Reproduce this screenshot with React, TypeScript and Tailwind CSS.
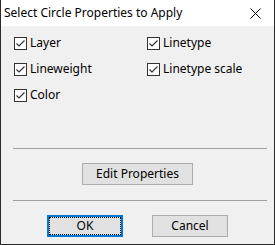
import React from "react";

function Check({ label }: { label: string }) {
  return (
    <div className="flex h-[26px] items-center">
      <div className="flex h-[13px] w-[13px] items-center justify-center border border-[#333333] bg-white">
        <svg width="11" height="11" viewBox="0 0 11 11">
          <path d="M1.5 5.5 L4 8 L9.5 2.5" fill="none" stroke="#333333" strokeWidth="1.2" />
        </svg>
      </div>
      <span className="ml-[3px] text-[12px] leading-none text-black">{label}</span>
    </div>
  );
}

export default function App() {
  return (
    <div
      className="flex h-[245px] w-[275px] flex-col border-x border-b border-[#2a2a2a] bg-[#f0f0f0]"
      style={{ fontFamily: '"Noto Sans", "Open Sans", sans-serif' }}
    >
      <div className="flex h-[26px] items-center justify-between bg-white pl-[3px] pr-[13px]">
        <span className="text-[12px] text-black">Select Circle Properties to Apply</span>
        <svg width="11" height="11" viewBox="0 0 11 11">
          <path d="M0.5 0.5 L10.5 10.5 M10.5 0.5 L0.5 10.5" stroke="#000" strokeWidth="1" />
        </svg>
      </div>
      <div className="flex flex-col pt-[4px]">
        <div className="flex pl-[13px]">
          <div className="flex w-[133px] flex-col">
            <Check label="Layer" />
            <Check label="Lineweight" />
            <Check label="Color" />
          </div>
          <div className="flex flex-col">
            <Check label="Linetype" />
            <Check label="Linetype scale" />
          </div>
        </div>
        <div className="ml-[12px] mt-[40px] h-[1px] w-[254px] bg-[#a0a0a0]" />
        <div className="mt-[14px] flex pl-[81px]">
          <button className="flex h-[22px] w-[111px] items-center justify-center border border-[#adadad] bg-[#e1e1e1] text-[12px] text-black">
            Edit Properties
          </button>
        </div>
        <div className="ml-[12px] mt-[15px] h-[1px] w-[254px] bg-[#a0a0a0]" />
        <div className="mt-[14px] flex pl-[46px]">
          <button className="flex h-[22px] w-[76px] items-center justify-center border-2 border-[#0078d7] bg-[#e1e1e1] p-0 text-[12px] text-black">
            <span className="flex h-full w-full items-center justify-center border border-dotted border-black">OK</span>
          </button>
          <button className="ml-[29px] flex h-[22px] w-[76px] items-center justify-center border border-[#adadad] bg-[#e1e1e1] text-[12px] text-black">
            Cancel
          </button>
        </div>
      </div>
    </div>
  );
}
